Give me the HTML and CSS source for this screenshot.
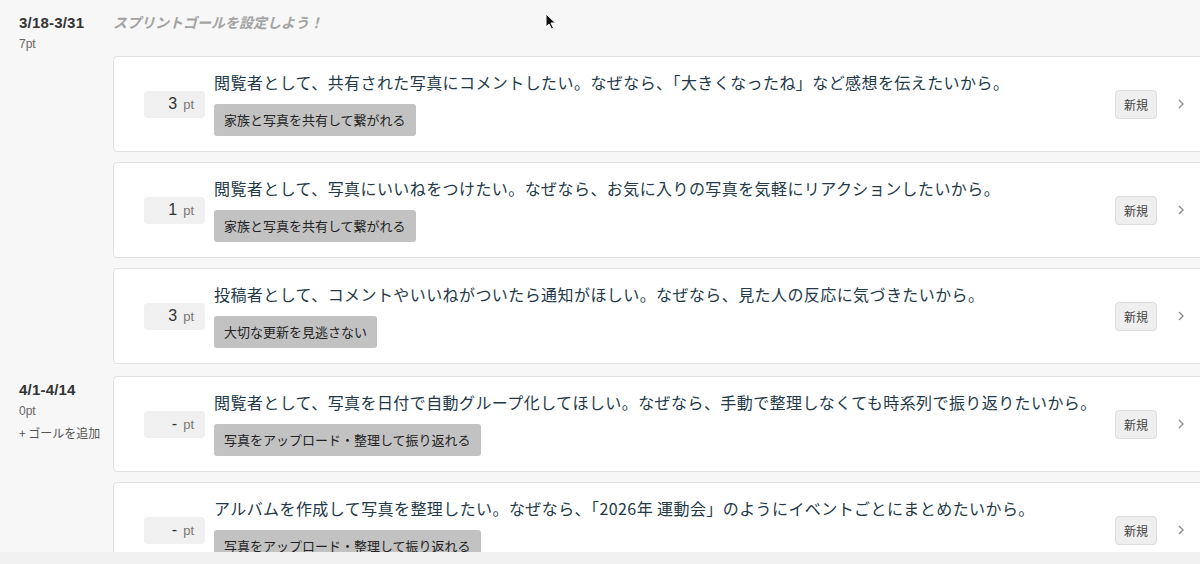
FILE: index.html
```html
<!DOCTYPE html>
<html lang="ja">
<head>
    <meta charset="UTF-8">
    <meta name="viewport" content="width=device-width, initial-scale=1.0">
    <title>Sprint Backlog</title>
    <link rel="stylesheet" href="styles.css">
</head>
<body>

    <div class="board">

        <!-- Sprint 1 -->
        <div class="sprint firstSprint">
            <div class="sprintInfo">
                <div class="sprintDates">3/18-3/31</div>
                <div class="sprintPoints">7pt</div>
            </div>
            <div class="sprintBody">
                <div class="goalHint">スプリントゴールを設定しよう！</div>
                <div class="storyList">
                    <div class="story">
                        <div class="points"><span class="pointValue">3</span><span class="pointUnit">pt</span></div>
                        <div class="storyMain">
                            <div class="storyTitle">閲覧者として、共有された写真にコメントしたい。なぜなら、「大きくなったね」など感想を伝えたいから。</div>
                            <span class="epicTag">家族と写真を共有して繋がれる</span>
                        </div>
                        <span class="statusBadge">新規</span>
                        <span class="chevron"><svg width="8" height="12" viewBox="0 0 8 12"><path d="M2 2l4 4-4 4" fill="none" stroke="#8a8a8a" stroke-width="1.4"/></svg></span>
                    </div>
                    <div class="story">
                        <div class="points"><span class="pointValue">1</span><span class="pointUnit">pt</span></div>
                        <div class="storyMain">
                            <div class="storyTitle">閲覧者として、写真にいいねをつけたい。なぜなら、お気に入りの写真を気軽にリアクションしたいから。</div>
                            <span class="epicTag">家族と写真を共有して繋がれる</span>
                        </div>
                        <span class="statusBadge">新規</span>
                        <span class="chevron"><svg width="8" height="12" viewBox="0 0 8 12"><path d="M2 2l4 4-4 4" fill="none" stroke="#8a8a8a" stroke-width="1.4"/></svg></span>
                    </div>
                    <div class="story">
                        <div class="points"><span class="pointValue">3</span><span class="pointUnit">pt</span></div>
                        <div class="storyMain">
                            <div class="storyTitle">投稿者として、コメントやいいねがついたら通知がほしい。なぜなら、見た人の反応に気づきたいから。</div>
                            <span class="epicTag">大切な更新を見逃さない</span>
                        </div>
                        <span class="statusBadge">新規</span>
                        <span class="chevron"><svg width="8" height="12" viewBox="0 0 8 12"><path d="M2 2l4 4-4 4" fill="none" stroke="#8a8a8a" stroke-width="1.4"/></svg></span>
                    </div>
                </div>
            </div>
        </div>

        <!-- Sprint 2 -->
        <div class="sprint">
            <div class="sprintInfo">
                <div class="sprintDates">4/1-4/14</div>
                <div class="sprintPoints">0pt</div>
                <div class="addGoal">+ ゴールを追加</div>
            </div>
            <div class="sprintBody">
                <div class="storyList">
                    <div class="story">
                        <div class="points"><span class="pointValue">-</span><span class="pointUnit">pt</span></div>
                        <div class="storyMain">
                            <div class="storyTitle">閲覧者として、写真を日付で自動グループ化してほしい。なぜなら、手動で整理しなくても時系列で振り返りたいから。</div>
                            <span class="epicTag">写真をアップロード・整理して振り返れる</span>
                        </div>
                        <span class="statusBadge">新規</span>
                        <span class="chevron"><svg width="8" height="12" viewBox="0 0 8 12"><path d="M2 2l4 4-4 4" fill="none" stroke="#8a8a8a" stroke-width="1.4"/></svg></span>
                    </div>
                    <div class="story">
                        <div class="points"><span class="pointValue">-</span><span class="pointUnit">pt</span></div>
                        <div class="storyMain">
                            <div class="storyTitle">アルバムを作成して写真を整理したい。なぜなら、「2026年 運動会」のようにイベントごとにまとめたいから。</div>
                            <span class="epicTag">写真をアップロード・整理して振り返れる</span>
                        </div>
                        <span class="statusBadge">新規</span>
                        <span class="chevron"><svg width="8" height="12" viewBox="0 0 8 12"><path d="M2 2l4 4-4 4" fill="none" stroke="#8a8a8a" stroke-width="1.4"/></svg></span>
                    </div>
                </div>
            </div>
        </div>

    </div>

    <div class="bottomBar"></div>

    <!-- mouse pointer -->
    <svg class="cursor" width="12" height="18" viewBox="0 0 12 18">
        <path d="M1 1v13l3-3 2.5 5 2-1-2.5-5h4.5z" fill="#111" stroke="#fff" stroke-width="1"/>
    </svg>

</body>
</html>
```

FILE: styles.css
```css
body {
    margin: 0;
    height: 564px;
    overflow: hidden;
    background-color: #f7f7f7;
    font-family: "Liberation Sans", "Noto Sans CJK JP", sans-serif;
    color: #333;
    position: relative;
}

.board {
    height: 552px;
    overflow: hidden;
    width: 1214px;
}

.sprint {
    display: flex;
    padding-bottom: 12px;
}

.firstSprint {
    padding-top: 9px;
}

.sprintInfo {
    width: 94px;
    flex-shrink: 0;
    padding-left: 19px;
    padding-top: 4px;
}

.sprintDates {
    font-size: 15px;
    font-weight: bold;
    line-height: 20px;
    letter-spacing: 0.2px;
    color: #333;
}

.sprintPoints {
    font-size: 12px;
    line-height: 16px;
    margin-top: 3px;
    color: #666;
}

.addGoal {
    font-size: 12px;
    line-height: 16px;
    margin-top: 6px;
    color: #555;
    font-family: "Noto Sans CJK JP", sans-serif;
}

.sprintBody {
    flex: 1;
}

.goalHint {
    font-family: "Noto Sans CJK JP", sans-serif;
    font-size: 14px;
    font-weight: bold;
    font-style: italic;
    line-height: 20px;
    color: #a3a3a3;
    padding-top: 3px;
    height: 44px;
}

.storyList {
    display: flex;
    flex-direction: column;
    gap: 10px;
}

.story {
    display: flex;
    align-items: center;
    height: 94px;
    background-color: white;
    border: 1px solid #e1e1e1;
    border-radius: 4px;
    padding: 0 28px 0 30px;
}

.points {
    width: 61px;
    height: 27px;
    flex-shrink: 0;
    display: flex;
    align-items: center;
    justify-content: flex-end;
    box-sizing: border-box;
    padding-right: 11px;
    background-color: #f0f0f0;
    border-radius: 4px;
}

.pointValue {
    font-size: 16px;
    color: #333;
}

.pointUnit {
    font-size: 13px;
    color: #777;
    margin-left: 6px;
}

.storyMain {
    flex: 1;
    margin-left: 9px;
    padding-bottom: 2px;
}

.storyTitle {
    font-family: "Noto Sans CJK JP", sans-serif;
    font-size: 16px;
    line-height: 22px;
    letter-spacing: 0.42px;
    color: #233948;
    white-space: nowrap;
}

.epicTag {
    display: inline-block;
    margin-top: 11px;
    height: 32px;
    line-height: 32px;
    padding: 0 10px;
    font-family: "Noto Sans CJK JP", sans-serif;
    font-size: 13px;
    color: #222;
    background-color: #c2c2c2;
    border-radius: 3px;
}

.statusBadge {
    flex-shrink: 0;
    width: 42px;
    height: 29px;
    line-height: 27px;
    box-sizing: border-box;
    text-align: center;
    font-family: "Noto Sans CJK JP", sans-serif;
    font-size: 12px;
    color: #444;
    background-color: #efefef;
    border: 1px solid #dcdcdc;
    border-radius: 4px;
}

.chevron {
    display: flex;
    margin-left: 20px;
}

.bottomBar {
    height: 12px;
    background-color: #f1f1f1;
}

.cursor {
    position: absolute;
    left: 545px;
    top: 13px;
}
```
